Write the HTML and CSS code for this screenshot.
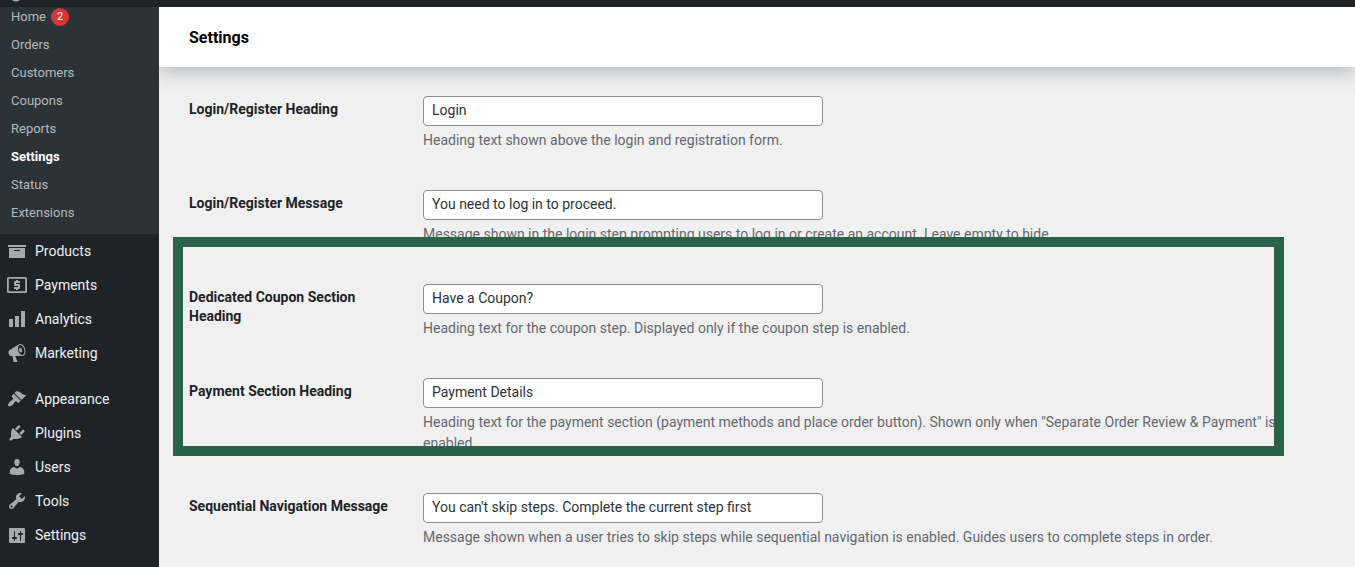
FILE: index.html
```html
<!DOCTYPE html>
<html lang="en">
<head>
<meta charset="utf-8">
<title>Settings</title>
<meta name="viewport" content="width=device-width, initial-scale=1">
<link rel="stylesheet" href="styles.css">
</head>
<body>
<div class="admin-bar"><svg class="bar-mark" viewBox="0 0 12 2" aria-hidden="true"><path d="M2 0h8q-2 1.500-4 1.500T2 0z"/></svg></div>
<div class="shell">
  <nav class="sidebar" aria-label="Main menu">
    <ul class="submenu">
      <li><a href="#">Home <span class="count">2</span></a></li>
      <li><a href="#">Orders</a></li>
      <li><a href="#">Customers</a></li>
      <li><a href="#">Coupons</a></li>
      <li><a href="#">Reports</a></li>
      <li><a href="#" class="current" aria-current="page">Settings</a></li>
      <li><a href="#">Status</a></li>
      <li><a href="#">Extensions</a></li>
    </ul>
    <ul class="menu">
      <li><a href="#"><svg viewBox="0 0 20 20" aria-hidden="true"><path d="M19 4v2H1V4h18zM2 7h16v10H2V7zm11 3V9H7v1h6z"/></svg>Products</a></li>
      <li><a href="#"><svg viewBox="0 0 20 20" aria-hidden="true"><path fill-rule="evenodd" d="M1.500 2h17Q20 2 20 3.500v13q0 1.500-1.500 1.500h-17Q0 18 0 16.500v-13Q0 2 1.500 2zm.3 1.800v12.400h16.400V3.800z"/><path d="M9 5h2v1h2v2H9v1h3q1 0 1 1v3q0 1-1 1h-1v1H9v-1H7v-2h4v-1H8q-1 0-1-1V7q0-1 1-1h1z"/></svg>Payments</a></li>
      <li><a href="#"><svg viewBox="0 0 20 20" aria-hidden="true"><path d="M2 10h4v8H2zM8 7h4v11H8zM14 2h4v16h-4z"/></svg>Analytics</a></li>
      <li><a href="#"><svg viewBox="0 0 20 20" aria-hidden="true"><path d="M18.150 5.940c.46 1.620.38 3.220-.02 4.480-.42 1.280-1.260 2.180-2.300 2.480-.16.06-.26.06-.4.06-.06.02-.12.02-.18.02-.06.02-.14.02-.22.02h-6.800l2.220 5.500c.02.14-.06.26-.14.34-.08.1-.24.16-.34.16H6.950c-.1 0-.26-.06-.34-.16-.08-.08-.16-.2-.14-.34l-1-5.500H4.250l-.02-.02c-.5.06-1.080-.18-1.540-.62s-.88-1.080-1.060-1.880c-.24-.8-.2-1.560-.02-2.200.18-.62.58-1.080 1.060-1.300l.02-.02 9-5.400c.1-.06.18-.1.24-.16.06-.04.14-.08.24-.12.16-.08.28-.12.5-.18 1.040-.3 2.240.1 3.220.98s1.840 2.240 2.260 3.860zm-2.580 5.980h-.02c.4-.1.74-.34 1.040-.7.58-.7.86-1.760.86-3.040 0-.64-.1-1.300-.28-1.980-.34-1.360-1.020-2.500-1.780-3.240s-1.680-1.100-2.460-.88c-.82.22-1.400.96-1.700 2-.32 1.040-.28 2.360.06 3.720.38 1.360 1 2.500 1.800 3.240.78.74 1.620 1.100 2.480.88zm-2.540-7.080c.22-.04.42-.02.62.04.38.16.76.48 1.020 1s.42 1.200.42 1.780c0 .3-.04.56-.12.8-.18.48-.44.84-.86.94-.34.1-.8-.06-1.140-.4s-.64-.86-.78-1.500c-.18-.62-.12-1.240.02-1.720s.48-.84.82-.94z"/></svg>Marketing</a></li>
      <li class="separated"><a href="#"><svg viewBox="0 0 20 20" aria-hidden="true"><path d="M14.480 11.060L7.410 3.990l1.500-1.500c.5-.56 2.300-.47 3.510.32 1.210.8 1.430 1.280 2.910 2.100 1.180.64 2.450 1.260 4.450.85zm-.71.71L6.700 4.700 4.930 6.470c-.39.39-.39 1.020 0 1.410l1.060 1.060c.39.39.39 1.030 0 1.420-.6.6-1.430 1.110-2.210 1.690-.35.26-.7.53-1.010.84C1.430 14.230.4 16.080 1.400 17.070c.99 1 2.840-.03 4.180-1.360.31-.31.58-.66.85-1.020.57-.78 1.080-1.610 1.690-2.210.39-.39 1.020-.39 1.410 0l1.060 1.060c.39.39 1.020.39 1.410 0z"/></svg>Appearance</a></li>
      <li><a href="#"><svg viewBox="0 0 20 20" aria-hidden="true"><path d="M13.110 4.360L9.870 7.600 8 5.730l3.240-3.240c.35-.34 1.050-.2 1.560.32.52.51.66 1.210.31 1.550zm-8 1.770l.91-1.120 9.010 9.010-1.190.84c-.71.71-2.630 1.160-3.820 1.160H6.140L4.900 17.260c-.59.59-1.540.59-2.120 0-.59-.58-.59-1.530 0-2.120l1.240-1.240v-3.880c0-1.130.4-3.190 1.090-3.890zm7.260 3.970l3.240-3.240c.34-.35 1.040-.21 1.550.31.52.51.66 1.210.31 1.550l-3.240 3.250z"/></svg>Plugins</a></li>
      <li><a href="#"><svg viewBox="0 0 20 20" aria-hidden="true"><path d="M10 9.250c-2.270 0-2.730-3.440-2.730-3.440C7 4.020 7.820 2 9.970 2c2.160 0 2.980 2.020 2.710 3.810 0 0-.41 3.440-2.680 3.440zm0 2.570L12.720 10c2.390 0 4.520 2.330 4.520 4.530v2.490s-3.650 1.130-7.240 1.130c-3.650 0-7.240-1.130-7.240-1.130v-2.490c0-2.250 1.940-4.480 4.470-4.480z"/></svg>Users</a></li>
      <li><a href="#"><svg viewBox="0 0 20 20" aria-hidden="true"><path d="M16.680 9.770c-1.340 1.340-3.300 1.670-4.950.99l-5.410 6.520c-.99.99-2.590.99-3.580 0s-.99-2.590 0-3.570l6.520-5.420c-.68-1.650-.35-3.610.99-4.950 1.280-1.280 3.120-1.620 4.720-1.060l-2.890 2.890 2.820 2.820 2.860-2.870c.53 1.580.18 3.390-1.080 4.650zM3.810 16.210c.4.39 1.040.39 1.430 0 .4-.4.4-1.040 0-1.430-.39-.4-1.030-.4-1.430 0-.39.39-.39 1.030 0 1.430z"/></svg>Tools</a></li>
      <li><a href="#"><svg viewBox="0 0 20 20" aria-hidden="true"><path fill-rule="evenodd" d="M3 3h14q1 0 1 1v13q0 1-1 1H3q-1 0-1-1V4q0-1 1-1zM8 12h1c.55 0 1 .45 1 1s-.45 1-1 1H8v1.500c0 .28-.22.5-.5.5s-.5-.22-.5-.5V14H6c-.55 0-1-.45-1-1s.45-1 1-1h1V6.500c0-.28.22-.5.5-.5s.5.22.5.5V12zm5-2h-1c-.55 0-1-.45-1-1s.45-1 1-1h1V6.500c0-.28.22-.5.5-.5s.5.22.5.5V8h1c.55 0 1 .45 1 1s-.45 1-1 1h-1v5.500c0 .28-.22.5-.5.5s-.5-.22-.5-.5V10z"/></svg>Settings</a></li>
    </ul>
  </nav>
  <main class="content">
    <header class="page-header"><h1>Settings</h1></header>
    <form class="settings-form">
      <div class="row">
        <label for="login-heading">Login/Register Heading</label>
        <div class="field">
          <input type="text" id="login-heading" value="Login">
          <p>Heading text shown above the login and registration form.</p>
        </div>
      </div>
      <div class="row">
        <label for="login-message">Login/Register Message</label>
        <div class="field">
          <input type="text" id="login-message" value="You need to log in to proceed.">
          <p>Message shown in the login step prompting users to log in or create an account. Leave empty to hide.</p>
        </div>
      </div>
      <div class="highlighted">
        <div class="row">
          <label for="coupon-heading">Dedicated Coupon Section Heading</label>
          <div class="field">
            <input type="text" id="coupon-heading" value="Have a Coupon?">
            <p>Heading text for the coupon step. Displayed only if the coupon step is enabled.</p>
          </div>
        </div>
        <div class="row">
          <label for="payment-heading">Payment Section Heading</label>
          <div class="field">
            <input type="text" id="payment-heading" value="Payment Details">
            <p>Heading text for the payment section (payment methods and place order button). Shown only when "Separate Order Review &amp; Payment" is enabled.</p>
          </div>
        </div>
        <div class="highlight-frame"></div>
      </div>
      <div class="row">
        <label for="navigation-message">Sequential Navigation Message</label>
        <div class="field">
          <input type="text" id="navigation-message" value="You can't skip steps. Complete the current step first">
          <p>Message shown when a user tries to skip steps while sequential navigation is enabled. Guides users to complete steps in order.</p>
        </div>
      </div>
    </form>
  </main>
</div>
</body>
</html>
```

FILE: styles.css
```css
* { box-sizing: border-box; }

body {
  margin: 0;
  min-height: 100vh;
  display: flex;
  flex-direction: column;
  background: #f0f0f0;
  color: #1d2327;
  font: 14px/20px Roboto, "Liberation Sans", sans-serif;
}

ul { list-style: none; margin: 0; padding: 0; }
a { text-decoration: none; }

.admin-bar { height: 7px; padding-left: 10px; background: #1d2327; }
.bar-mark { display: block; width: 12px; height: 2px; fill: #a7aaad; }

.shell { flex: 1; display: flex; }

.sidebar { flex: 0 0 159px; background: #1d2327; }

.submenu { padding-bottom: 7px; background: #2c3338; }
.submenu a {
  display: flex;
  align-items: center;
  gap: 5px;
  height: 28px;
  padding: 0 11px;
  color: #b4b9be;
  font-size: 13px;
}
.submenu li:first-child { padding-bottom: 4px; }
.submenu li:first-child a { height: 20px; }
.submenu .current { color: #fff; font-weight: 700; }
.count {
  width: 18px;
  height: 18px;
  border-radius: 9px;
  background: #d63638;
  color: #fff;
  font-size: 11px;
  line-height: 18px;
  text-align: center;
}

.menu a {
  display: flex;
  align-items: center;
  gap: 8px;
  height: 34px;
  padding-left: 7px;
  color: #f0f0f1;
}
.menu svg { width: 20px; height: 20px; fill: #a7aaad; }
.menu .separated { margin-top: 12px; }

.content { flex: 1; min-width: 0; overflow: hidden; }

.page-header {
  display: flex;
  align-items: center;
  height: 60px;
  padding: 2px 30px 0;
  background: #fff;
  box-shadow: 0 8px 16px rgba(85, 93, 102, 0.3);
}
.page-header h1 { margin: 0; color: #000; font-size: 16px; font-weight: 700; }

.settings-form { padding: 14px 30px 0; }

.row {
  display: grid;
  grid-template-columns: 200px 1fr;
  column-gap: 34px;
  padding: 15px 0 24px;
}
.row label { padding-top: 4px; font-weight: 700; line-height: 19px; }
.row input {
  display: block;
  width: 100%;
  max-width: 400px;
  height: 30px;
  padding: 0 8px 2px;
  border: 1px solid #8c8f94;
  border-radius: 4px;
  background: #fff;
  color: #2c3338;
  font: inherit;
}
.row p { margin: 4px 0 0; color: #646970; line-height: 21px; }

.highlighted { position: relative; }
.highlight-frame {
  position: absolute;
  inset: -32px 41px 22px -16px;
  border: 10px solid #2a6448;
  pointer-events: none;
}
```
